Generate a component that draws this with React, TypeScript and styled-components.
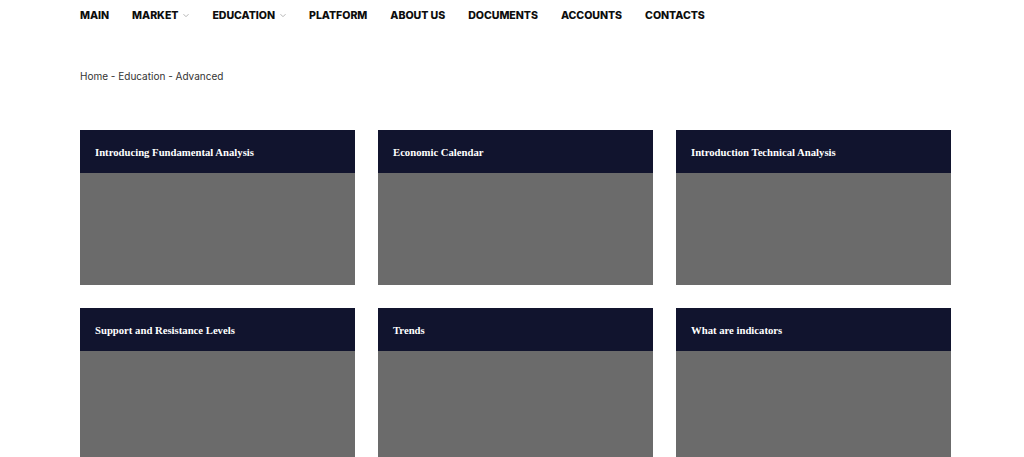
import React from "react";
import styled, { createGlobalStyle } from "styled-components";

const Global = createGlobalStyle`
  html, body { margin: 0; padding: 0; background: #fff; }
  body { font-family: "Inter", "Liberation Sans", sans-serif; color: #111; }
`;

const Page = styled.div`
  width: 1024px;
  padding: 0 0 0 80px;
  box-sizing: border-box;
`;

const Nav = styled.nav`
  display: flex;
  align-items: center;
  gap: 23px;
  height: 31px;
`;

const NavItem = styled.span`
  display: inline-flex;
  align-items: center;
  gap: 5px;
  font-family: "Inter", "Liberation Sans", sans-serif;
  font-weight: 800;
  font-size: 10.6px;
  letter-spacing: -0.05px;
  text-transform: uppercase;
  color: #0d0d0d;
`;

const Chevron = styled.svg`
  width: 6px;
  height: 5px;
  margin-top: -1px;
`;

const Crumbs = styled.div`
  margin-top: 38px;
  font-family: "Inter", "Liberation Sans", sans-serif;
  font-size: 10px;
  color: #333;
  height: 14px;
  line-height: 14px;
`;

const Grid = styled.div`
  margin-top: 47px;
  display: grid;
  grid-template-columns: repeat(3, 275px);
  column-gap: 23px;
  row-gap: 23px;
`;

const Card = styled.div`
  display: flex;
  flex-direction: column;
  height: 155px;
`;

const CardHead = styled.div`
  height: 43px;
  background: #11142e;
  display: flex;
  align-items: center;
  padding: 0 15px;
  font-family: "Liberation Serif", "DejaVu Serif", serif;
  font-weight: 700;
  font-size: 10.7px;
  color: #fff;
`;

const CardBody = styled.div`
  flex: 1;
  background: #6b6b6b;
`;

const navItems: { label: string; drop?: boolean }[] = [
  { label: "Main" },
  { label: "Market", drop: true },
  { label: "Education", drop: true },
  { label: "Platform" },
  { label: "About us" },
  { label: "Documents" },
  { label: "Accounts" },
  { label: "Contacts" },
];

const cards = [
  "Introducing Fundamental Analysis",
  "Economic Calendar",
  "Introduction Technical Analysis",
  "Support and Resistance Levels",
  "Trends",
  "What are indicators",
];

export default function App() {
  return (
    <>
      <Global />
      <Page>
        <Nav>
          {navItems.map((n) => (
            <NavItem key={n.label}>
              {n.label}
              {n.drop && (
                <Chevron viewBox="0 0 6 5">
                  <path d="M0.5 1.2 L3 3.7 L5.5 1.2" fill="none" stroke="#b5b5b5" strokeWidth="1" />
                </Chevron>
              )}
            </NavItem>
          ))}
        </Nav>
        <Crumbs>Home - Education - Advanced</Crumbs>
        <Grid>
          {cards.map((c) => (
            <Card key={c}>
              <CardHead>{c}</CardHead>
              <CardBody />
            </Card>
          ))}
        </Grid>
      </Page>
    </>
  );
}
